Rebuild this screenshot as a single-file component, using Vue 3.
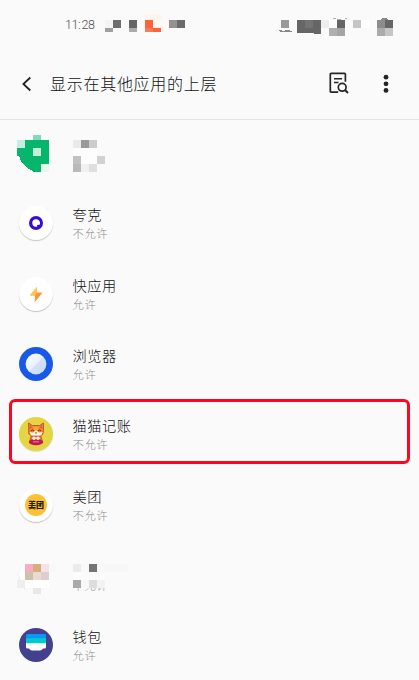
<script setup>
const statusBlocks = [
  [145, 14, 16, 6, '#fef4ee'], [153, 20, 8, 8, '#fffaf7'], [161, 20, 8, 12, '#fff8f6'],
  [105, 20, 8, 8, '#f4f4f4'], [113, 20, 8, 8, '#6d6d6d'], [105, 28, 8, 4, '#a0a0a0'],
  [129, 20, 8, 8, '#656565'], [129, 28, 8, 4, '#aaaaaa'],
  [145, 20, 8, 8, '#ff6239'], [145, 28, 8, 4, '#f47e57'], [153, 28, 8, 4, '#ff6239'],
  [169, 20, 8, 8, '#929292'], [177, 20, 8, 8, '#6b6b6b'],
  [281, 20, 8, 8, '#999999'], [305, 20, 8, 8, '#737373'],
  [321, 20, 8, 8, '#eeeeee'], [329, 20, 8, 8, '#ffffff'], [337, 20, 8, 8, '#656565'],
  [329, 28, 8, 8, '#b0b0b0'], [337, 28, 8, 8, '#a5a5a5'],
  [353, 20, 8, 8, '#c5c5c5'], [361, 20, 8, 8, '#ffffff'],
  [377, 20, 8, 8, '#8c8c8c'], [385, 20, 8, 8, '#666666'],
  [377, 28, 8, 8, '#aaaaaa'], [385, 28, 8, 8, '#c5c5c5'],
]
const apps = [
  { id: 'masked-green' },
  { id: 'quark', name: '夸克', state: '不允许' },
  { id: 'quick', name: '快应用', state: '允许' },
  { id: 'browser', name: '浏览器', state: '允许' },
  { id: 'cat', name: '猫猫记账', state: '不允许', marked: true },
  { id: 'meituan', name: '美团', state: '不允许' },
  { id: 'masked-pink', name: '', state: '不允许' },
  { id: 'wallet', name: '钱包', state: '允许' },
]
const greenBlocks = [
  [33, 12, 8, 5, '#83d8b5'], [17, 17, 8, 8, '#c4efe0'], [25, 17, 24, 8, '#06b56c'],
  [17, 25, 32, 8, '#06b56c'], [33, 25, 8, 8, '#c4efdc'], [25, 33, 24, 8, '#06b56c'],
  [33, 41, 8, 8, '#06b56c'], [41, 41, 8, 8, '#edf6ee'], [49, 33, 8, 8, '#f6fcfa'],
  [73, 17, 8, 8, '#eaeaea'], [81, 17, 8, 8, '#999999'], [89, 17, 8, 8, '#cccccc'],
  [73, 25, 24, 8, '#fdfdfd'], [73, 33, 8, 8, '#c1c1c1'], [81, 33, 16, 8, '#fdfdfd'],
  [97, 33, 8, 8, '#d0d1d1'], [73, 41, 8, 8, '#b9b9b9'], [81, 41, 8, 8, '#f1f1f1'], [89, 41, 8, 8, '#dfdfdf'],
]
const pinkBlocks = [
  [17, 16, 40, 8, '#fafafa'], [49, 32, 8, 22, '#fafafa'], [25, 48, 24, 8, '#fafafa'],
  [25, 24, 8, 8, '#ffaac4'], [33, 24, 8, 8, '#d3af7d'], [41, 24, 8, 8, '#f8dfe8'], [49, 24, 8, 8, '#f8f8f8'],
  [25, 32, 8, 8, '#c8c5a6'], [33, 32, 8, 8, '#e9dbd3'], [41, 32, 8, 8, '#dfccd0'],
  [17, 40, 8, 8, '#eeeeee'], [25, 40, 24, 8, '#ffffff'], [33, 48, 8, 6, '#e8e8e8'],
  [73, 24, 8, 8, '#ebebeb'], [81, 24, 8, 8, '#f9f9f9'], [89, 24, 8, 8, '#747474'], [97, 24, 32, 8, '#f8f8f8'],
  [73, 32, 32, 8, '#fbfbfb'], [73, 40, 8, 8, '#a9a9a9'], [81, 40, 8, 8, '#f7f7f7'], [89, 40, 8, 8, '#dddddd'], [97, 40, 8, 8, '#f3f3f3'], [105, 40, 8, 8, '#fafafa'],
]
</script>

<template>
  <main class="screen">
    <div class="status">
      <span class="clock">11<i>:</i>28</span>
      <svg class="overlay" width="419" height="48">
        <path d="M297 20H321V34L299 32.5H297Z" fill="#666" />
        <path d="M279 30L282 30L282 31L287 30L292 31V32H280Z" fill="#888" />
        <path d="M333 18h3M337 19h4M345 18.5h2" stroke="#aaa" />
        <path d="M380 20Q385 15 389 20Z" fill="#888" />
        <rect v-for="(b, i) in statusBlocks" :key="i" :x="b[0]" :y="b[1]" :width="b[2]" :height="b[3]" :fill="b[4]" />
      </svg>
    </div>
    <header class="bar">
      <svg class="back" width="12" height="16" viewBox="0 0 12 16"><path d="M9.3 1.5L2.4 8L9.3 14.5" fill="none" stroke="#222" stroke-width="1.8" /></svg>
      <h1>显示在其他应用的上层</h1>
      <svg class="find" width="20" height="22" viewBox="0 0 20 22" fill="none" stroke="#252525" stroke-width="1.7">
        <path d="M9.2 20.1H2.2Q1.3 20.1 1.3 19.2V2.3Q1.3 1.4 2.2 1.4H15.5Q16.4 1.4 16.4 2.3V9.7" />
        <path d="M5 6.8H13M5 10.4H9.5" stroke-width="1.5" />
        <circle cx="13.2" cy="15.3" r="3.9" /><path d="M16 18.1L19 20.9" stroke-width="2" />
      </svg>
      <svg class="more" width="6" height="20" viewBox="0 0 6 20" fill="#252525"><circle cx="3" cy="3.2" r="2.4" /><circle cx="3" cy="9.8" r="2.4" /><circle cx="3" cy="16.4" r="2.4" /></svg>
    </header>
    <section class="list">
      <div v-for="app in apps" :key="app.id" class="row">
        <svg v-if="app.id === 'masked-green'" class="overlay lowered" width="419" height="60">
          <path d="M19 32Q21 44 36 49V32Z" fill="#06b56c" />
          <rect v-for="(b, i) in greenBlocks" :key="i" :x="b[0]" :y="b[1]" :width="b[2]" :height="b[3]" :fill="b[4]" />
        </svg>
        <template v-else>
          <div class="icon" :class="app.id">
            <svg v-if="app.id !== 'meituan'" width="34" height="34" viewBox="0 0 34 34">
              <template v-if="app.id === 'quark'">
                <circle cx="17" cy="17" r="7" fill="#3b0bd3" />
                <path d="M17 13.3A3.7 3.7 0 1 0 17 20.7H18.2L18 19L20.6 18.8A3.7 3.7 0 0 0 17 13.3Z" fill="#fff" />
              </template>
              <template v-else-if="app.id === 'quick'">
                <path d="M18 10L10.8 18.4H16.2L15.7 25L23.2 15.8H18Z" fill="#ffac42" />
                <path d="M18 10L10.8 18.4H16.2L18 15.8Z" fill="#ffc745" /><path d="M16.2 18.4L15.7 25L23.2 15.8H18Z" fill="#ff9140" />
              </template>
              <template v-else-if="app.id === 'browser'">
                <defs><linearGradient id="lens" x2="1" y2="1"><stop stop-color="#fff" /><stop offset=".5" stop-color="#e9f1fe" /><stop offset=".51" stop-color="#d5e3f9" /><stop offset="1" stop-color="#c5d8f5" /></linearGradient></defs>
                <circle cx="17" cy="17" r="10.4" fill="url(#lens)" />
              </template>
              <template v-else-if="app.id === 'cat'">
                <path d="M9.5 6L13.5 8.5H20.5L24.5 6V13L24 17L20 20H14L9.8 17Z" fill="#f58226" stroke="#a93c26" stroke-width=".7" />
                <path d="M10.6 8L13 10L11 12ZM23.4 8L21 10L23 12Z" fill="#e84a67" />
                <path d="M14 8.8L16 10.5L17 8.8L18 10.5L20 8.8L19 13H15Z" fill="#ffa43d" />
                <path d="M10.5 15L14 15.5L17 13L20 15.5L23.7 15L22 18.6L17 20L12 18.6Z" fill="#fff5df" />
                <path d="M12 14L13.5 13L15 14M19 14L20.5 13L22 14" fill="none" stroke="#67241c" stroke-width=".9" /><path d="M16 15.5h2L17 17Z" fill="#762922" />
                <path d="M12 19H22L23.5 25H10.5Z" fill="#ef7a2f" stroke="#a64025" stroke-width=".6" />
                <ellipse cx="17" cy="25" rx="7.2" ry="3.3" fill="#bd1c50" /><path d="M14 24.8H20" stroke="#f16a83" stroke-width="1.3" />
                <circle cx="15" cy="21.3" r="1.8" fill="#fff1d4" /><circle cx="19" cy="21.3" r="1.8" fill="#fff1d4" />
              </template>
              <template v-else-if="app.id === 'wallet'">
                <path d="M7 11V7.5Q7 6 8.5 6H25.5Q27 6 27 7.5V11Z" fill="#0799f3" />
                <path d="M7 10.3H27V16H7Z" fill="#05cbc7" />
                <path d="M7 15.2H27V19Q27 20.5 25.5 20.5H24Q23 22.6 21 22.6H13Q11 22.6 10 20.5H8.5Q7 20.5 7 19Z" fill="#fff" />
              </template>
            </svg>
            <span v-else class="brand">美团</span>
          </div>
          <div class="copy"><div class="name">{{ app.name }}</div><div class="state">{{ app.state }}</div></div>
          <svg v-if="app.id === 'masked-pink'" class="overlay" width="419" height="70">
            <rect v-for="(b, i) in pinkBlocks" :key="i" :x="b[0]" :y="b[1]" :width="b[2]" :height="b[3]" :fill="b[4]" />
          </svg>
          <div v-if="app.marked" class="mark"></div>
        </template>
      </div>
    </section>
  </main>
</template>

<style>
body { background: #fafafa; overflow: hidden; }
</style>
<style scoped>
.screen { width: 419px; height: 680px; overflow: hidden; background: #fafafa; font-family: "Noto Sans CJK SC", sans-serif; font-weight: 300; color: #111; }
.status { position: relative; height: 48px; box-sizing: border-box; padding: 16px 0 0 65px; }
.clock { display: block; font: 300 12.5px/18px Roboto, sans-serif; color: #505050; letter-spacing: -.5px; }
.clock i { font-style: normal; margin: 0 1.5px 0 0; }
.overlay { position: absolute; left: 0; top: 0; shape-rendering: crispEdges; }
.lowered { top: 5px; }
.bar { display: flex; align-items: center; height: 72px; box-sizing: border-box; border-bottom: 1px solid #e5e5e5; padding-left: 21px; }
.back { flex: none; }
h1 { width: 250px; margin: 0 0 2px 17px; font-size: 16px; line-height: 24px; font-weight: 300; letter-spacing: .72px; white-space: nowrap; }
.find { margin: 0 0 1px 29px; }
.more { margin-left: 34px; }
.list { margin-top: -2px; }
.row { position: relative; display: flex; align-items: center; height: 70.3px; padding-left: 19px; }
.icon { display: flex; align-items: center; justify-content: center; width: 34px; height: 34px; border-radius: 50%; background: #fff; box-shadow: 0 1px 1px #c4c4c4; }
.browser { background: #1859e8; box-shadow: none; }
.cat { background: #e5d544; box-shadow: 0 1px 1px #ddd; }
.wallet { background: #42408f; box-shadow: none; }
.brand { display: flex; align-items: center; justify-content: center; width: 22px; height: 22px; border-radius: 50%; background: #ffc034; color: #221b10; font-size: 8px; line-height: 10px; font-weight: 900; }
.copy { margin-left: 19.5px; }
.name { height: 20px; font-size: 14.2px; line-height: 19px; letter-spacing: .55px; }
.state { font-size: 11.3px; line-height: 16px; letter-spacing: .6px; color: #8c8c8c; }
.mark { position: absolute; left: 8.5px; top: 0; width: 401.5px; height: 65px; box-sizing: border-box; border: 3px solid #ff0520; border-radius: 6px; }
</style>
